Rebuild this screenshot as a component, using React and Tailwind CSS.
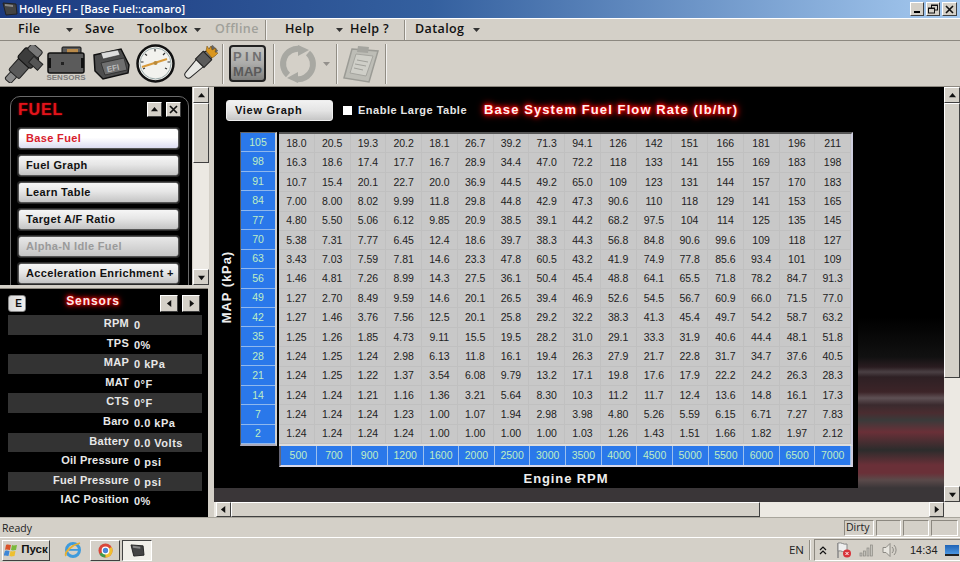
import React from "react";

const rows = [
  ["105","18.0 20.5 19.3 20.2 18.1 26.7 39.2 71.3 94.1 126 142 151 166 181 196 211"],
  ["98","16.3 18.6 17.4 17.7 16.7 28.9 34.4 47.0 72.2 118 133 141 155 169 183 198"],
  ["91","10.7 15.4 20.1 22.7 20.0 36.9 44.5 49.2 65.0 109 123 131 144 157 170 183"],
  ["84","7.00 8.00 8.02 9.99 11.8 29.8 44.8 42.9 47.3 90.6 110 118 129 141 153 165"],
  ["77","4.80 5.50 5.06 6.12 9.85 20.9 38.5 39.1 44.2 68.2 97.5 104 114 125 135 145"],
  ["70","5.38 7.31 7.77 6.45 12.4 18.6 39.7 38.3 44.3 56.8 84.8 90.6 99.6 109 118 127"],
  ["63","3.43 7.03 7.59 7.81 14.6 23.3 47.8 60.5 43.2 41.9 74.9 77.8 85.6 93.4 101 109"],
  ["56","1.46 4.81 7.26 8.99 14.3 27.5 36.1 50.4 45.4 48.8 64.1 65.5 71.8 78.2 84.7 91.3"],
  ["49","1.27 2.70 8.49 9.59 14.6 20.1 26.5 39.4 46.9 52.6 54.5 56.7 60.9 66.0 71.5 77.0"],
  ["42","1.27 1.46 3.76 7.56 12.5 20.1 25.8 29.2 32.2 38.3 41.3 45.4 49.7 54.2 58.7 63.2"],
  ["35","1.25 1.26 1.85 4.73 9.11 15.5 19.5 28.2 31.0 29.1 33.3 31.9 40.6 44.4 48.1 51.8"],
  ["28","1.24 1.25 1.24 2.98 6.13 11.8 16.1 19.4 26.3 27.9 21.7 22.8 31.7 34.7 37.6 40.5"],
  ["21","1.24 1.25 1.22 1.37 3.54 6.08 9.79 13.2 17.1 19.8 17.6 17.9 22.2 24.2 26.3 28.3"],
  ["14","1.24 1.24 1.21 1.16 1.36 3.21 5.64 8.30 10.3 11.2 11.7 12.4 13.6 14.8 16.1 17.3"],
  ["7","1.24 1.24 1.24 1.23 1.00 1.07 1.94 2.98 3.98 4.80 5.26 5.59 6.15 6.71 7.27 7.83"],
  ["2","1.24 1.24 1.24 1.24 1.00 1.00 1.00 1.00 1.03 1.26 1.43 1.51 1.66 1.82 1.97 2.12"],
];
const rpm = "500 700 900 1200 1600 2000 2500 3000 3500 4000 4500 5000 5500 6000 6500 7000".split(" ");
const sensors = [
  ["RPM","0"],["TPS","0%"],["MAP","0 kPa"],["MAT","0°F"],["CTS","0°F"],["Baro","0.0 kPa"],
  ["Battery","0.0 Volts"],["Oil Pressure","0 psi"],["Fuel Pressure","0 psi"],["IAC Position","0%"],
];
const fuelButtons = [
  ["Base Fuel","active"],["Fuel Graph",""],["Learn Table",""],["Target A/F Ratio",""],["Alpha-N Idle Fuel","off"],["Acceleration Enrichment +",""],
];

function Tri({ dir = "up", size = 7 }) {
  const pts = { up: "0,6 4,1 8,6", down: "0,2 8,2 4,7", left: "6,0 6,8 1,4", right: "2,0 2,8 7,4" }[dir];
  return <svg width={size} height={size} viewBox="0 0 8 8"><polygon points={pts} fill="#111" /></svg>;
}
function Bevel({ className = "", children }) {
  return (
    <div className={"flex items-center justify-center bg-[#d4d0c8] border border-t-white border-l-white border-r-[#404040] border-b-[#404040] shrink-0 " + className}>
      {children}
    </div>
  );
}
function Caret({ className = "" }) {
  return <svg className={className} width="7" height="4" viewBox="0 0 7 4"><polygon points="0,0 7,0 3.5,4" fill="#333" /></svg>;
}
function MenuItem({ w, children, gray }) {
  return <div className={"shrink-0 text-[12.5px] tracking-[0.4px] " + w + (gray ? " text-[#a0a09a]" : " text-[#111]")}>{children}</div>;
}
function Sep({ className = "" }) {
  return <div className={"w-[2px] shrink-0 border-l border-[#918d84] bg-white/70 " + className} />;
}

function Injector() {
  return (
    <svg width="42" height="38" viewBox="0 0 42 38" className="shrink-0">
      <g transform="rotate(-48 21 19)">
        <rect x="-2" y="15" width="10" height="8" rx="2" fill="#8a8a8a" stroke="#222" />
        <rect x="7" y="12" width="16" height="14" rx="2" fill="#5a5a5a" stroke="#222" />
        <rect x="22" y="10" width="14" height="18" rx="3" fill="#3c3c3c" stroke="#111" />
        <rect x="35" y="12" width="8" height="14" rx="2" fill="#777" stroke="#222" />
        <rect x="26" y="22" width="8" height="12" fill="#555" stroke="#222" />
      </g>
    </svg>
  );
}
function SensorsIcon() {
  return (
    <div className="shrink-0 w-[38px] flex flex-col items-center">
      <svg width="38" height="28" viewBox="0 0 38 28">
        <rect x="15" y="1" width="19" height="8" rx="1" fill="#5a5a5a" stroke="#111" />
        <rect x="20" y="3" width="11" height="4" fill="#b98a4a" />
        <rect x="1" y="7" width="36" height="20" rx="2" fill="#5b5b5b" stroke="#111" strokeWidth="1.5" />
        <rect x="1" y="12" width="3" height="10" fill="#111" />
        <rect x="34" y="12" width="3" height="10" fill="#111" />
        <rect x="14" y="16" width="3" height="3" fill="#222" />
      </svg>
      <div className="text-[8px] leading-[9px] font-bold text-[#7c7c7c] -mt-px">SENSORS</div>
    </div>
  );
}
function EfiIcon() {
  return (
    <svg width="40" height="34" viewBox="0 0 40 34" className="shrink-0">
      <polygon points="3,8 30,2 38,18 37,26 12,32 4,24" fill="#4d4d4d" stroke="#111" strokeWidth="1.5" />
      <polygon points="10,6 27,3 29,8 12,12" fill="#ddd" stroke="#222" strokeWidth=".5" />
      <polygon points="10,16 33,11 36,23 14,28" fill="#6f6f6f" stroke="#222" strokeWidth=".7" />
      <text x="16" y="24" fontSize="8" fontWeight="700" fill="#bbb" fontFamily="Liberation Sans" transform="rotate(-12 22 22)">EFI</text>
    </svg>
  );
}
function Gauge() {
  return (
    <svg width="39" height="39" viewBox="0 0 39 39" className="shrink-0">
      <circle cx="19.5" cy="19.5" r="18" fill="#f2f2ee" stroke="#111" strokeWidth="2.500" />
      <circle cx="19.5" cy="19.5" r="15.5" fill="none" stroke="#9aa" strokeWidth="1" />
      <g stroke="#333" strokeWidth="1.2">
        <path d="M7 25l2-1M5 18h2.500M9 10l2 1.500M19 5v2.500M29 9l-2 2M34 18h-2.500M31 25l-2-1" />
      </g>
      <line x1="6" y1="23" x2="31" y2="15" stroke="#d89a3a" strokeWidth="2.200" />
      <circle cx="19.500" cy="19" r="2" fill="#b8893a" />
    </svg>
  );
}
function Plug() {
  return (
    <svg width="38" height="38" viewBox="0 0 38 38" className="shrink-0">
      <g transform="rotate(45 19 19)">
        <rect x="15" y="-4" width="8" height="5" fill="#666" />
        <path d="M15.500 4h7l1.500 3h-10z" fill="#777" stroke="#222" />
        <rect x="13" y="7" width="12" height="11" fill="#5b5b5b" stroke="#222" />
        <path d="M14 18h10l-1.500 16a3 3 0 0 1-7 0z" fill="#e8e8e4" stroke="#222" />
      </g>
      <path d="M27 1l2 3 2-3 1 4 4-2-1 4 3 1-3 3-3 2-6-7z" fill="#d9961f" stroke="#6d4a10" strokeWidth=".5" />
    </svg>
  );
}
function Refresh() {
  return (
    <svg width="38" height="38" viewBox="0 0 38 38" className="shrink-0" fill="none">
      <path d="M9 30A15 15 0 0 1 21 4" stroke="#a8a8a2" strokeWidth="6" />
      <polygon points="19,0 30,5 19,11" fill="#a8a8a2" />
      <path d="M29 8A15 15 0 0 1 17 34" stroke="#a8a8a2" strokeWidth="6" />
      <polygon points="19,27 8,33 19,38" fill="#a8a8a2" />
    </svg>
  );
}
function Clipboard() {
  return (
    <svg width="38" height="38" viewBox="0 0 38 38" className="shrink-0">
      <polygon points="10,4 36,6 27,37 2,33" fill="#bdbdb6" stroke="#9b9b95" strokeWidth="1.500" />
      <polygon points="14,9 31,11 24,31 8,28" fill="#cfcfc8" stroke="#a5a59f" />
      <polygon points="16,1 27,2 26,8 15,7" fill="#a5a59f" />
      <path d="M15 15l11 2M13 19l11 2M12 23l9 2" stroke="#a0a09a" strokeWidth="1" />
    </svg>
  );
}
function IEIcon() {
  return (
    <svg width="18" height="18" viewBox="0 0 18 18">
      <circle cx="9" cy="9" r="6.500" fill="none" stroke="#3f9bdc" strokeWidth="3" />
      <rect x="5" y="8" width="9" height="1.800" fill="#3f9bdc" />
      <path d="M2 15C0 11 8 4 16 2" fill="none" stroke="#e8b030" strokeWidth="1.800" />
    </svg>
  );
}
function ChromeIcon() {
  return (
    <svg width="15" height="15" viewBox="0 0 16 16">
      <circle cx="8" cy="8" r="7.500" fill="#d9473a" />
      <path d="M8 8L1.500 11.700A7.500 7.500 0 0 0 8 15.500z" fill="#3f9a4a" />
      <path d="M8 8L8 15.500A7.500 7.500 0 0 0 14.500 4.200z" fill="#f0c030" />
      <circle cx="8" cy="8" r="3.500" fill="#4a86d8" stroke="#fff" strokeWidth="1.300" />
    </svg>
  );
}
function WinFlag() {
  return (
    <svg width="16" height="14" viewBox="0 0 16 14">
      <path d="M2 2c2-1 3 0 5 0l-1 5c-2 0-3-1-5 0z" fill="#d9532a" />
      <path d="M8 2c2 1 3 0 5 0l-1 5c-2 0-3 1-5 0z" fill="#7ab83a" />
      <path d="M1 8c2-1 3 0 4.500 0l-1 5c-2 0-3-1-5 0z" fill="#3e87d6" />
      <path d="M6.500 8c2 1 3 0 5 0l-1 5c-2 0-3 1-5 0z" fill="#eec02e" />
    </svg>
  );
}
function AppIcon({ size = 14 }) {
  return (
    <svg width={size + 2} height={size} viewBox="0 0 16 14">
      <polygon points="1,1 14,2 15,12 4,13" fill="#444" stroke="#222" />
      <polygon points="3,2 11,3 11,5 3,4" fill="#888" />
    </svg>
  );
}

function VScroll({ thumbH, className = "" }) {
  return (
    <div className={"w-[16px] flex flex-col bg-[#ece9e3] shrink-0 " + className}>
      <Bevel className="h-[16px]"><Tri dir="up" /></Bevel>
      <Bevel className={thumbH} />
      <div className="flex-1" />
      <Bevel className="h-[16px]"><Tri dir="down" /></Bevel>
    </div>
  );
}

export default function App() {
  return (
    <div className="w-[960px] h-[562px] overflow-hidden flex flex-col bg-[#d4d0c8] font-['Liberation_Sans',sans-serif]">
      {/* Title */}
      <div className="h-[18px] shrink-0 flex items-center pl-[2px] pr-[3px] bg-[linear-gradient(90deg,#1c3a80_0%,#34609f_45%,#a6caf0_100%)]">
        <AppIcon />
        <div className="ml-[1px] text-[11px] font-semibold tracking-[0.05px] text-white font-['Open_Sans',sans-serif] flex-1">Holley EFI - [Base Fuel::camaro]</div>
        <div className="flex gap-[2px]">
          <Bevel className="w-[14px] h-[14px] items-end pb-[2px]"><div className="w-[6px] h-[2px] bg-black" /></Bevel>
          <Bevel className="w-[14px] h-[14px]">
            <svg width="10" height="10" viewBox="0 0 10 10" fill="none" stroke="#111"><rect x="3.500" y="1" width="6" height="5" /><rect x="0.500" y="4" width="6" height="5" fill="#d4d0c8" /><path d="M3.500 1.500h6M.5 4.500h6" /></svg>
          </Bevel>
          <Bevel className="w-[15px] h-[14px]">
            <svg width="9" height="9" viewBox="0 0 9 9" stroke="#111" strokeWidth="1.600"><path d="M1 1l7 7M8 1l-7 7" /></svg>
          </Bevel>
        </div>
      </div>
      {/* Menu */}
      <div className="h-[23px] shrink-0 flex items-center pl-[18px] border-t border-white border-b border-b-[#8c8880] font-['Open_Sans',sans-serif] font-semibold">
        <MenuItem w="w-[48px]">File</MenuItem>
        <Caret />
        <div className="w-[12px] shrink-0" />
        <MenuItem w="w-[52px]">Save</MenuItem>
        <MenuItem w="w-[57px]">Toolbox</MenuItem>
        <Caret className="mr-[14px]" />
        <MenuItem w="w-[50px]" gray>Offline</MenuItem>
        <Sep className="h-[20px]" />
        <div className="w-[18px] shrink-0" />
        <MenuItem w="w-[51px]">Help</MenuItem>
        <Caret className="mr-[7px]" />
        <MenuItem w="w-[54px]">Help ?</MenuItem>
        <Sep className="h-[20px]" />
        <div className="w-[9px] shrink-0" />
        <MenuItem w="w-[58px]">Datalog</MenuItem>
        <Caret />
      </div>
      {/* Toolbar */}
      <div className="h-[45px] shrink-0 flex items-center pl-[2px]">
        <Injector />
        <div className="w-[3px] shrink-0" />
        <SensorsIcon />
        <div className="w-[6px] shrink-0" />
        <EfiIcon />
        <div className="w-[5px] shrink-0" />
        <Gauge />
        <div className="w-[5px] shrink-0" />
        <Plug />
        <div className="w-[4px] shrink-0" />
        <Sep className="h-[40px]" />
        <div className="w-[5px] shrink-0" />
        <div className="w-[37px] h-[37px] shrink-0 rounded-[4px] border-2 border-[#222] bg-[linear-gradient(180deg,#c4c4c0_0%,#acacaa_50%,#7f7f7d_100%)] flex flex-col items-center justify-center text-[#707070] text-[13px] leading-[15px] font-bold">
          <div className="tracking-[3.5px] pl-[3px]">PIN</div>
          <div className="text-[#5a5a5a]">MAP</div>
        </div>
        <div className="w-[7px] shrink-0" />
        <Sep className="h-[40px]" />
        <div className="w-[4px] shrink-0" />
        <Refresh />
        <Caret className="ml-[6px] opacity-40" />
        <div className="w-[6px] shrink-0" />
        <Sep className="h-[40px]" />
        <div className="w-[4px] shrink-0" />
        <Clipboard />
        <div className="w-[5px] shrink-0" />
        <Sep className="h-[40px]" />
      </div>
      {/* Main */}
      <div className="h-[431px] shrink-0 flex border-t border-[#8c8880]">
        {/* Left */}
        <div className="w-[209px] shrink-0 flex flex-col">
          <div className="h-[198px] shrink-0 flex">
            <div className="w-[192px] bg-black pt-[9px] pl-[10px] overflow-hidden shrink-0">
              <div className="w-[179px] h-[220px] rounded-t-[10px] border border-[#6a6a6a] pl-[7px] pr-[9px] pt-[4px]">
                <div className="flex items-center h-[17px]">
                  <div className="flex-1 text-[16px] font-black tracking-[0.8px] text-[#e0141c] [text-shadow:0_0_2px_#900]">FUEL</div>
                  <Bevel className="w-[15px] h-[15px]"><Tri dir="up" /></Bevel>
                  <div className="w-[4px] shrink-0" />
                  <Bevel className="w-[15px] h-[15px] -mr-[2px]">
                    <svg width="9" height="9" viewBox="0 0 9 9" stroke="#111" strokeWidth="1.700"><path d="M1 1l7 7M8 1l-7 7" /></svg>
                  </Bevel>
                </div>
                <div className="mt-[10px] flex flex-col gap-[6px]">
                  {fuelButtons.map(([t, s]) => (
                    <div key={t} className={"h-[21px] shrink-0 rounded-[3px] border border-[#555] ring-1 ring-[#2a2a2a] flex items-center pl-[7px] text-[11px] font-bold tracking-[0.35px] whitespace-nowrap " +
                      (s === "active" ? "bg-[linear-gradient(180deg,#ffffff_0%,#ffffff_45%,#dcdcf0_100%)] text-[#d8202c]" : s === "off" ? "bg-[linear-gradient(180deg,#e8e8e8_0%,#c4c4c4_100%)] text-[#9a9a9a]" : "bg-[linear-gradient(180deg,#f6f6f6_0%,#e6e6e6_45%,#c4c4c4_100%)] text-[#111]")}>
                      {t}
                    </div>
                  ))}
                </div>
              </div>
            </div>
            <VScroll thumbH="h-[60px]" className="ml-[1px]" />
          </div>
          <div className="h-[232px] shrink-0 border-t-[3px] border-[#d4d0c8] pr-[1px]">
            <div className="h-[229px] bg-black border-t border-[#8c8880] flex flex-col px-[8px] pt-[5px] text-white">
              <div className="h-[18px] shrink-0 flex items-center">
                <div className="w-[18px] h-[17px] rounded-[3px] border border-[#888] bg-[linear-gradient(90deg,#d9d9d9,#f0f0f0)] text-[#111] font-bold text-[10px] flex items-center justify-end pr-[3px]">E</div>
                <div className="w-[134px] text-center text-[12px] font-bold tracking-[0.9px] pb-[4px] text-[#fbe8e8] [text-shadow:0_0_3px_#f00,0_0_5px_#f00,0_0_7px_#e00]">Sensors</div>
                <Bevel className="w-[18px] h-[17px]"><Tri dir="left" /></Bevel>
                <div className="w-[4px] shrink-0" />
                <Bevel className="w-[18px] h-[17px]"><Tri dir="right" /></Bevel>
              </div>
              <div className="mt-[3px] w-[194px] flex flex-col">
                {sensors.map(([k, v], i) => (
                  <div key={k} className={"h-[19.6px] shrink-0 flex items-center text-[11px] font-bold text-[#e8e8e8] " + (i % 2 === 0 ? "bg-[#333333]" : "")}>
                    <div className="w-[121px] text-right whitespace-nowrap tracking-[0.25px] pb-[3px]">{k}</div>
                    <div className="ml-[5px] whitespace-nowrap pt-[1px] tracking-[0.5px]">{v}</div>
                  </div>
                ))}
              </div>
            </div>
          </div>
        </div>
        {/* Right */}
        <div className="w-[5px] shrink-0" />
        <div className="flex-1 flex flex-col min-w-0 h-[430px]">
          <div className="flex h-[415px] shrink-0">
            <div className="w-[730px] shrink-0 overflow-hidden bg-[linear-gradient(180deg,#000_0,#000_230px,#111_270px,#2a1c20_280px,#4a4044_285px,#2e2024_290px,#3c2428_305px,#5e5054_311px,#3a2a2e_318px,#4a2c30_326px,#3a3a3a_333px,#6a3038_345px,#2c2c2c_363px,#6a3038_378px,#6a3038_386px,#5a4a4a_393px,#3a3638_401px,#3a3638_415px)]">
              <div className="w-[644px] h-[401px] bg-black flex flex-col text-white">
                <div className="h-[45px] shrink-0 flex items-center pl-[12px] pb-[1px] pt-[2px]">
                  <div className="w-[107px] h-[21px] rounded-[3px] border border-[#eee] bg-[linear-gradient(180deg,#f2f2f2_0%,#e4e4e4_50%,#c6c6c6_100%)] text-[#111] text-[11px] font-bold tracking-[0.7px] flex items-center pl-[8px] shrink-0">View Graph</div>
                  <div className="ml-[10px] w-[9px] h-[9px] bg-white shrink-0" />
                  <div className="ml-[6px] w-[126px] shrink-0 text-[11px] font-bold tracking-[0.5px] text-[#e6e6e6] whitespace-nowrap">Enable Large Table</div>
                  <div className="text-[13px] font-bold tracking-[1.1px] text-[#fdeeee] whitespace-nowrap [text-shadow:0_0_2px_#f00,0_0_4px_#f00,0_0_6px_#f00,0_0_8px_#e00]">Base System Fuel Flow Rate (lb/hr)</div>
                </div>
                <div className="flex flex-1 min-h-0">
                  <div className="w-[26px] shrink-0 h-[310px] flex items-center justify-center">
                    <div className="[writing-mode:vertical-rl] rotate-180 text-[13px] font-bold tracking-[0.9px] text-[#eee] whitespace-nowrap">MAP (kPa)</div>
                  </div>
                  <div className="flex flex-col shrink-0">
                    <div className="flex shrink-0">
                      <div className="w-[37px] shrink-0 h-[314px] border-t border-[#666] border-l border-l-[#555] border-b-2 border-b-[#aab] border-r-2 border-r-[#d0d0d0] grid grid-rows-16 bg-[#2a78ea]">
                        {rows.map(([r]) => (
                          <div key={r} className="flex items-center justify-center pt-[1px] text-[10.5px] text-[#bfeec4] border-b border-[#8fb8ee]">{r}</div>
                        ))}
                      </div>
                      <div className="w-[2px] shrink-0" />
                      <div className="w-[574px] shrink-0 h-[314px] border-t-2 border-[#555] border-r-2 border-r-[#ccd] border-b-2 border-b-[#ddd] grid grid-rows-16 bg-[#c8c8c8]">
                        {rows.map(([r, vals]) => (
                          <div key={r} className="grid grid-cols-16 border-b border-[#c0c0c0]">
                            {vals.split(" ").map((v, i) => (
                              <div key={i} className="flex items-center justify-center pt-[1px] text-[10.5px] text-[#222] border-r border-[#c0c0c0]">{v}</div>
                            ))}
                          </div>
                        ))}
                      </div>
                    </div>
                    <div className="ml-[39px] w-[574px] h-[21px] shrink-0 grid grid-cols-16 bg-[#2a78ea] border-l-2 border-l-[#667] border-r-2 border-r-[#ccd] border-b-2 border-b-[#d8d8e8]">
                      {rpm.map((v) => (
                        <div key={v} className="flex items-center justify-center text-[10.5px] text-[#bfeec4] border-r border-[#9cc0ee]">{v}</div>
                      ))}
                    </div>
                    <div className="ml-[39px] w-[574px] mt-[2px] text-center text-[13px] font-bold tracking-[0.9px] text-[#eee]">Engine RPM</div>
                  </div>
                </div>
              </div>
            </div>
            <VScroll thumbH="h-[275px]" />
          </div>
          <div className="h-[15px] shrink-0 flex bg-[#ece9e3] pl-[2px] pr-[16px]">
            <Bevel className="w-[15px]"><Tri dir="left" /></Bevel>
            <Bevel className="w-[529px]" />
            <div className="flex-1" />
            <Bevel className="w-[15px]"><Tri dir="right" /></Bevel>
          </div>
        </div>
      </div>
      {/* Status */}
      <div className="h-[20px] shrink-0 flex items-center text-[10.5px] text-[#222] pl-[2px] pr-[2px] border-t border-[#a8a59c] font-['Open_Sans',sans-serif]">
        <div className="flex-1 pt-[2px]">Ready</div>
        <div className="w-[30px] h-[16px] border border-t-[#8c8880] border-l-[#8c8880] border-b-white border-r-white flex items-center pl-[1px] text-[10.5px] mr-[2px]">Dirty</div>
        <div className="w-[25px] h-[16px] border border-t-[#8c8880] border-l-[#8c8880] border-b-white border-r-white mr-[2px]" />
        <div className="w-[26px] h-[16px] border border-t-[#8c8880] border-l-[#8c8880] border-b-white border-r-white mr-[2px]" />
        <div className="w-[27px] h-[16px] border border-t-[#8c8880] border-l-[#8c8880] border-b-white border-r-white" />
      </div>
      {/* Taskbar */}
      <div className="flex-1 flex items-center pl-[2px] border-t border-white">
        <Bevel className="w-[48px] h-[21px] gap-[1px] border-r-[#333] border-b-[#333]">
          <WinFlag />
          <span className="text-[11.5px] font-bold text-[#111]">Пуск</span>
        </Bevel>
        <div className="ml-[14px] w-[18px] flex"><IEIcon /></div>
        <Bevel className="ml-[8px] w-[30px] h-[21px]"><ChromeIcon /></Bevel>
        <div className="ml-[2px] w-[30px] h-[21px] flex items-center justify-center bg-[#f1efe9] border border-t-[#444] border-l-[#444] border-b-white border-r-white"><AppIcon size={13} /></div>
        <div className="flex-1" />
        <div className="text-[11.5px] text-[#222] mr-[5px] font-['Open_Sans',sans-serif]">EN</div>
        <Sep className="h-[20px] mr-[3px]" />
        <div className="w-[146px] h-[22px] flex items-center border border-t-[#8c8880] border-l-[#8c8880] border-b-white border-r-0 pl-[4px]">
          <svg width="8" height="9" viewBox="0 0 8 9" fill="none" stroke="#111" strokeWidth="1.200"><path d="M1 4l3-3 3 3M1 8l3-3 3 3" /></svg>
          <svg className="ml-[8px]" width="18" height="18" viewBox="0 0 18 18">
            <path d="M3 2v15" stroke="#888" strokeWidth="1.500" />
            <path d="M3 2c4-1 5 2 9 1v8c-4 1-5-2-9-1z" fill="#eee" stroke="#888" />
            <circle cx="12" cy="12.500" r="4" fill="#d8333a" />
            <path d="M10.500 11l3 3M13.500 11l-3 3" stroke="#fff" />
          </svg>
          <svg className="ml-[6px]" width="16" height="14" viewBox="0 0 16 14" fill="#c4c2bc" stroke="#8c8a84" strokeWidth=".7">
            <rect x="1" y="10" width="2" height="3" /><rect x="4.500" y="8" width="2" height="5" /><rect x="8" y="5" width="2" height="8" /><rect x="11.500" y="2" width="2" height="11" />
          </svg>
          <svg className="ml-[6px]" width="18" height="16" viewBox="0 0 18 16" fill="none" stroke="#8c8a84">
            <path d="M2 5.500h3l4-4v13l-4-4H2z" fill="#e8e6e0" />
            <path d="M11 5a4 4 0 0 1 0 6M13 3a7 7 0 0 1 0 10" />
          </svg>
          <div className="ml-[11px] text-[11px] text-[#222]">14:34</div>
          <div className="ml-[7px] w-[14px] h-[11px] bg-[linear-gradient(180deg,#1f63b5,#4b96e0)] border-b-2 border-[#222]" />
        </div>
      </div>
    </div>
  );
}
